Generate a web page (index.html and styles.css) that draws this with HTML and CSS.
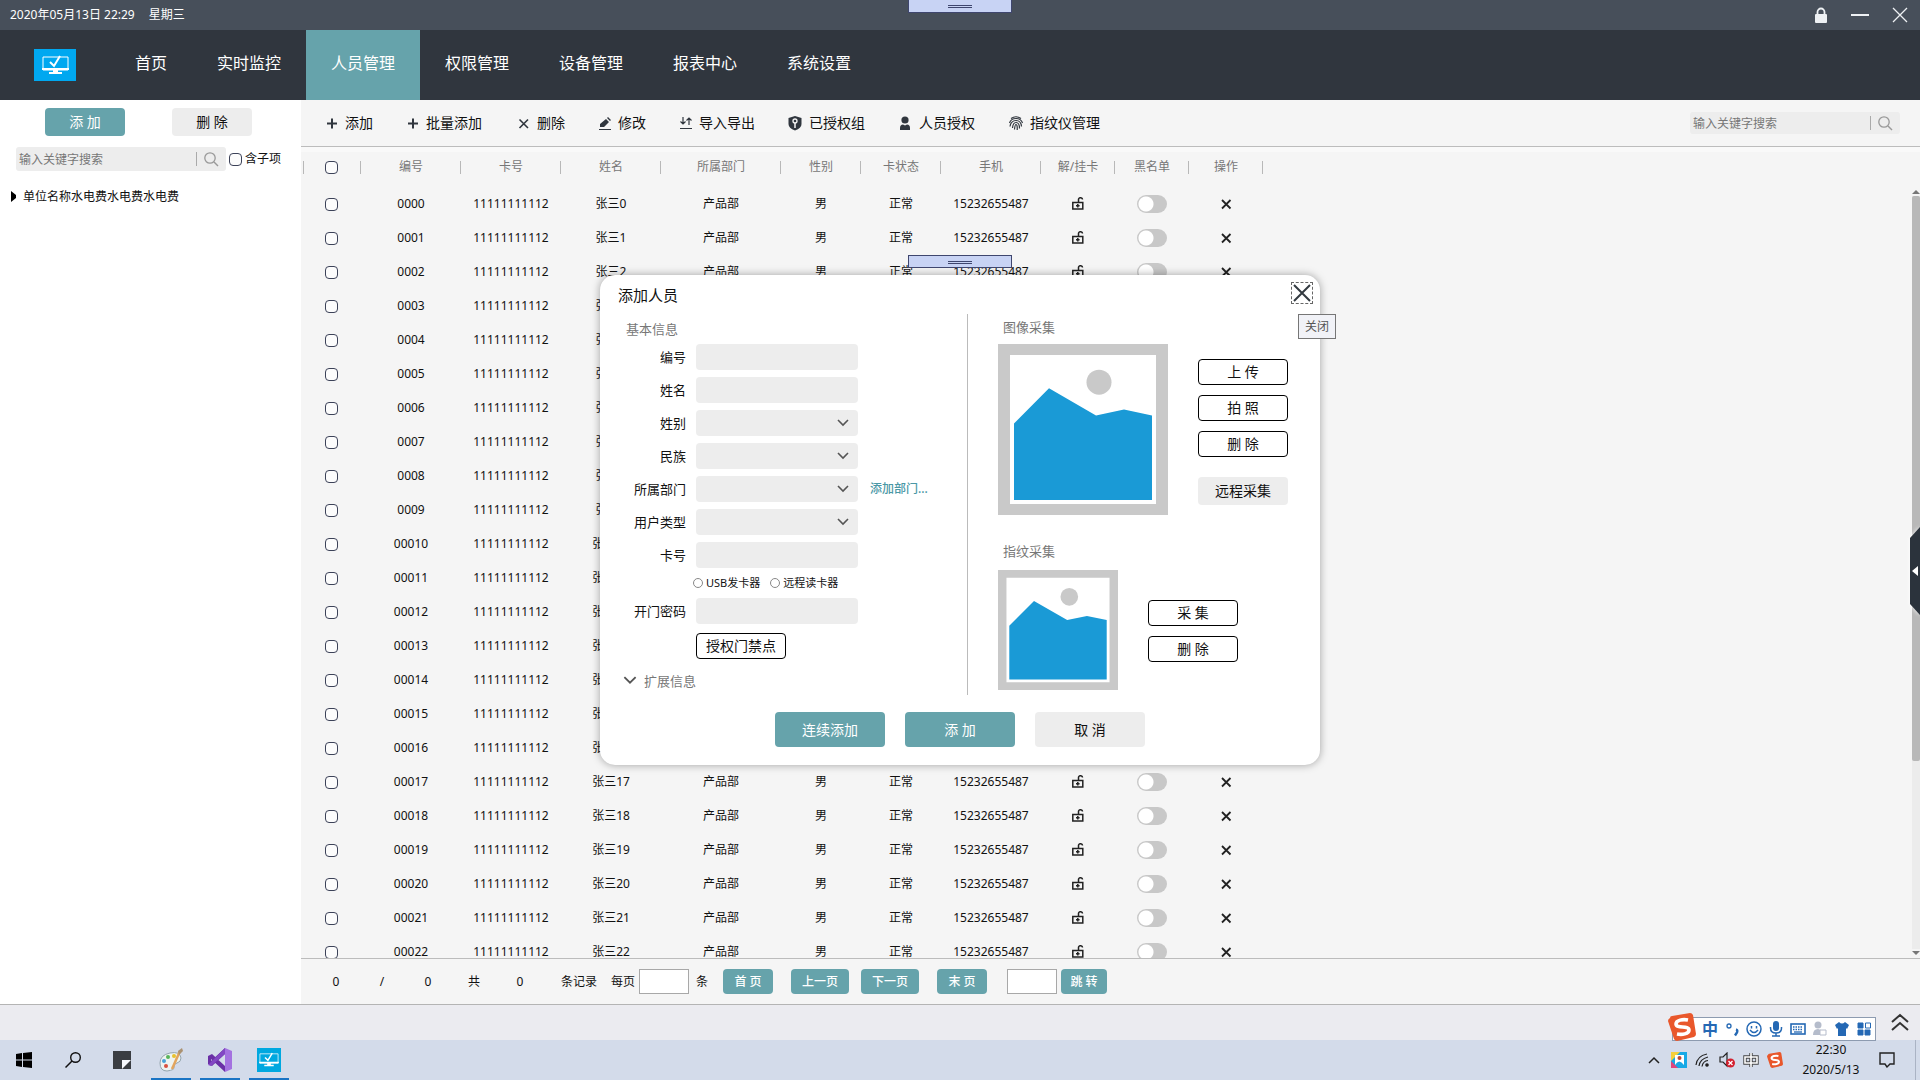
FILE: index.html
```html
<!DOCTYPE html>
<html lang="zh-CN">
<head>
<meta charset="utf-8">
<title>人员管理</title>
<link rel="stylesheet" href="styles.css">
</head>
<body>
<svg class="defs" aria-hidden="true">
  <symbol id="i-lock" viewBox="0 0 14 16"><path d="M3.500 7V5a3.500 3.500 0 0 1 7 0v2" fill="none" stroke="currentColor" stroke-width="1.800"/><rect x="1" y="7" width="12" height="9" rx="1" fill="currentColor"/></symbol>
  <symbol id="i-unlock" viewBox="0 0 14 14"><path d="M1.800 5.500h10v6.500h-10zM7.500 5.500V3a2 2 0 0 1 4-.5M6.800 7v3.500M5 8.700h3.600" fill="none" stroke="currentColor" stroke-width="1.500"/></symbol>
  <symbol id="i-x" viewBox="0 0 14 14"><path d="M3 3l8.500 8.500M11.500 3L3 11.500" fill="none" stroke="currentColor" stroke-width="1.800"/></symbol>
  <symbol id="i-plus" viewBox="0 0 16 16"><path d="M3 8.500h10M8 3.500v10" fill="none" stroke="currentColor" stroke-width="2"/></symbol>
  <symbol id="i-search" viewBox="0 0 16 16"><circle cx="7" cy="7" r="5.200" fill="none" stroke="currentColor" stroke-width="1.300"/><path d="M11 11l4 4" stroke="currentColor" stroke-width="1.500"/></symbol>
  <symbol id="i-down" viewBox="0 0 12 8"><path d="M1 1l5 5 5-5" fill="none" stroke="currentColor" stroke-width="1.600"/></symbol>
  <symbol id="i-monitor" viewBox="0 0 42 32"><path d="M9 8h25v13H9z" fill="none" stroke="currentColor"/><path d="M8 19h27v2H8zM19 21h5v2h4v2H15v-2h4z" fill="currentColor"/><path d="M16 13l4 4 6-10" fill="none" stroke="currentColor" stroke-width="2"/></symbol>
  <symbol id="i-sogou" viewBox="0 0 28 28"><path d="M2 5Q2 3 4 3L22 0Q24 0 25 2L28 21Q28 23 26 24L9 28Q7 28 6 26L0 8Q0 6 2 5z" fill="#e9572b"/><path d="M20 7C15 6 8 7 8 11c0 5 13 1 13 6 0 4-7 5-12 4" fill="none" stroke="#fff" stroke-width="3.600"/></symbol>
  <symbol id="i-picture" viewBox="0 0 170 170"><path d="M0 0h170v170H0z" fill="#c9c9c9"/><path d="M12 11h146v148H12z" fill="#fff"/><circle cx="101" cy="38" r="12.500" fill="#c9c9c9"/><path d="M16 79L51 44l47 27 28-6 28 6v84H16z" fill="#1a9ad6"/></symbol>
</svg>

<div class="app">
  <header class="titlebar">
    <time>2020年05月13日 22:29</time>
    <span class="weekday">星期三</span>
    <div class="window-tools">
      <button aria-label="锁定"><svg width="14" height="16"><use href="#i-lock"/></svg></button>
      <button aria-label="最小化"><svg width="18" height="16"><path d="M0 8h18" stroke="currentColor" stroke-width="2"/></svg></button>
      <button aria-label="退出"><svg width="16" height="16"><path d="M1 1l14 14M15 1L1 15" stroke="currentColor" stroke-width="1.300"/></svg></button>
    </div>
    <div class="grip grip-window"></div>
  </header>

  <nav class="mainnav">
    <svg class="logo" width="42" height="32"><use href="#i-monitor"/></svg>
    <a href="#">首页</a><a href="#">实时监控</a><a href="#" class="active">人员管理</a><a href="#">权限管理</a><a href="#">设备管理</a><a href="#">报表中心</a><a href="#">系统设置</a>
  </nav>

  <main class="main">
    <aside class="sidebar">
      <div class="side-actions">
        <button class="btn primary">添 加</button>
        <button class="btn plain">删 除</button>
      </div>
      <div class="side-search">
        <div class="search">
          <input type="text" aria-label="搜索部门" placeholder="输入关键字搜索">
          <button aria-label="搜索"><svg width="16" height="16"><use href="#i-search"/></svg></button>
        </div>
        <input type="checkbox" id="children"><label for="children">含子项</label>
      </div>
      <a href="#" class="tree-node"><svg width="6" height="12"><path d="M0 0l5 4v3l-5 4z"/></svg>单位名称水电费水电费水电费</a>
    </aside>

    <section class="content">
      <div class="toolbar">
        <button><svg width="16" height="16"><use href="#i-plus"/></svg>添加</button>
        <button><svg width="16" height="16"><use href="#i-plus"/></svg>批量添加</button>
        <button><svg width="18" height="16" viewBox="0 0 18 16"><path d="M5.500 4.500l8.500 8.500M14 4.500L5.500 13" fill="none" stroke="currentColor" stroke-width="1.600"/></svg>删除</button>
        <button><svg width="16" height="16" viewBox="0 0 16 16"><path d="M3 12V9l6-5 3 3-5 5zM10 3l1-1 3 3-1 1zM2 14h12v1H2z" fill="currentColor"/></svg>修改</button>
        <button><svg width="16" height="16" viewBox="0 0 16 16"><path d="M5 2v7M2.500 6.500L5 9l2.500-2.500M11 10V3M8.500 5.500L11 3l2.500 2.500M2 13.500h12" fill="none" stroke="currentColor" stroke-width="1.200"/></svg>导入导出</button>
        <button><svg width="17" height="16" viewBox="0 0 17 16"><path d="M8 1l6.500 2v6q0 4-6.500 6.500Q1.500 13 1.500 9V3z" fill="currentColor"/><circle cx="8" cy="6" r="2" fill="none" stroke="#f5f5f5" stroke-width="1.300"/><path d="M8 8v5" stroke="#f5f5f5" stroke-width="1.500"/></svg>已授权组</button>
        <button><svg width="17" height="16" viewBox="0 0 17 16"><circle cx="8" cy="5" r="3.600" fill="currentColor"/><path d="M3 15v-2q0-3.500 3-3.500l2 1 2-1q3 0 3 3.500v2z" fill="currentColor"/></svg>人员授权</button>
        <button><svg width="18" height="16" viewBox="0 0 18 16"><path d="M4 3.500Q9 0 14 3.500M2.500 8Q4 3.500 9 3.500T15.500 8M3 11.500Q4 5.500 9 5.500q5 0 5.500 6M5.500 13Q6 7.500 9 7.500q3.500 0 3.500 6M7.500 14.500Q8 9.500 9 9.500q1.500 0 1.200 5.500" fill="none" stroke="currentColor" stroke-width="1.200"/></svg>指纹仪管理</button>
        <div class="search">
          <input type="text" aria-label="搜索人员" placeholder="输入关键字搜索">
          <button aria-label="搜索"><svg width="16" height="16"><use href="#i-search"/></svg></button>
        </div>
      </div>

      <div class="list">
        <div class="list-view">
          <table class="people">
            <colgroup><col class="w60"><col class="w100"><col class="w100"><col class="w100"><col class="w120"><col class="w80"><col class="w80"><col class="w100"><col class="w74"><col class="w74"><col class="w74"></colgroup>
            <thead><tr><th><input type="checkbox" aria-label="全选"></th><th>编号</th><th>卡号</th><th>姓名</th><th>所属部门</th><th>性别</th><th>卡状态</th><th>手机</th><th>解/挂卡</th><th>黑名单</th><th>操作</th></tr></thead>
            <tbody id="rows"></tbody>
          </table>
        </div>
        <div class="scroll">
          <svg width="8" height="4"><path d="M4 0l4 4H0z"/></svg>
          <div class="track"><div class="thumb"></div></div>
          <svg width="8" height="4"><path d="M4 4l4-4H0z"/></svg>
        </div>
      </div>

      <div class="pager">
        <span class="num">0</span><span class="num">/</span><span class="num">0</span><span class="num">共</span><span class="num">0</span>
        <span class="records">条记录</span>
        <label for="size">每页</label><input type="text" id="size"><span class="unit">条</span>
        <button class="btn primary">首 页</button>
        <button class="btn primary wide">上一页</button>
        <button class="btn primary wide next">下一页</button>
        <button class="btn primary">末 页</button>
        <input type="text" class="goto" aria-label="页码"><button class="btn primary jump">跳 转</button>
      </div>
    </section>
  </main>

  <footer class="strip">
    <svg width="20" height="18" viewBox="0 0 20 18"><path d="M2 9l8-7 8 7M2 17l8-7 8 7" fill="none" stroke="#333" stroke-width="2"/></svg>
  </footer>

  <button class="drawer-tab" aria-label="展开"><svg width="10" height="88"><path d="M10 0v88L0 77V11z" fill="#2b333c"/><path d="M8 39v10l-6-5z" fill="#fff"/></svg></button>

  <div class="dialog" role="dialog" aria-labelledby="dlg-title">
    <div class="grip grip-dialog"></div>
    <div class="dialog-head">
      <h1 id="dlg-title">添加人员</h1>
      <button class="close" aria-label="关闭"><svg width="20" height="20"><path d="M2 2l16 16M18 2L2 18" stroke="currentColor" stroke-width="2"/></svg></button>
      <div class="tooltip" role="tooltip">关闭</div>
    </div>
    <form class="dialog-body">
      <div class="basic">
        <h2>基本信息</h2>
        <div class="fields">
          <label for="f-no">编号</label><input type="text" id="f-no">
          <label for="f-name">姓名</label><input type="text" id="f-name">
          <label for="f-sex">姓别</label><div class="select"><select id="f-sex"></select><svg width="12" height="8"><use href="#i-down"/></svg></div>
          <label for="f-nation">民族</label><div class="select"><select id="f-nation"></select><svg width="12" height="8"><use href="#i-down"/></svg></div>
          <label for="f-dept">所属部门</label><div class="select"><select id="f-dept"></select><svg width="12" height="8"><use href="#i-down"/></svg></div><a href="#">添加部门...</a>
          <label for="f-type">用户类型</label><div class="select"><select id="f-type"></select><svg width="12" height="8"><use href="#i-down"/></svg></div>
          <label for="f-card">卡号</label><input type="text" id="f-card">
          <div class="radios">
            <input type="radio" name="reader" id="r-usb"><label for="r-usb">USB发卡器</label>
            <input type="radio" name="reader" id="r-remote"><label for="r-remote">远程读卡器</label>
          </div>
          <label for="f-pwd">开门密码</label><input type="password" id="f-pwd">
          <button type="button" class="btn outline doors">授权门禁点</button>
        </div>
        <button type="button" class="more"><svg width="14" height="9" viewBox="0 0 12 8"><use href="#i-down"/></svg>扩展信息</button>
      </div>
      <div class="capture">
        <h2>图像采集</h2>
        <div class="shot">
          <svg width="170" height="171" viewBox="0 0 170 170" preserveAspectRatio="none"><use href="#i-picture" width="170" height="170"/></svg>
          <div class="shot-actions">
            <button type="button" class="btn outline">上 传</button>
            <button type="button" class="btn outline">拍 照</button>
            <button type="button" class="btn outline">删 除</button>
            <button type="button" class="btn plain remote">远程采集</button>
          </div>
        </div>
        <h2 class="finger-title">指纹采集</h2>
        <div class="shot finger">
          <svg width="120" height="120"><use href="#i-picture"/></svg>
          <div class="shot-actions">
            <button type="button" class="btn outline">采 集</button>
            <button type="button" class="btn outline">删 除</button>
          </div>
        </div>
      </div>
    </form>
    <div class="dialog-foot">
      <button class="btn primary">连续添加</button>
      <button class="btn primary">添 加</button>
      <button class="btn plain">取 消</button>
    </div>
  </div>

  <div class="ime">
    <svg class="ime-logo" width="28" height="28"><use href="#i-sogou"/></svg>
    <b>中</b>
    <svg width="16" height="16"><circle cx="5" cy="5" r="2" fill="none" stroke="currentColor" stroke-width="1.300"/><path d="M12 8.500q2 .5 1 3l-2 3" fill="none" stroke="currentColor" stroke-width="2.400"/></svg>
    <svg width="16" height="16" fill="none" stroke="currentColor" stroke-width="1.500"><circle cx="8" cy="8" r="7"/><path d="M5.500 5v2.500M10.500 5v2.500M4 9q4 5 8 0"/></svg>
    <svg width="16" height="16"><rect x="5" y="0" width="6" height="10" rx="3" fill="currentColor"/><path d="M2.500 6v1q0 5 5.500 5t5.500-5V6M8 12v3M4 15h8" fill="none" stroke="currentColor" stroke-width="1.500"/></svg>
    <svg width="16" height="16"><rect x="1" y="3" width="14" height="10" fill="none" stroke="currentColor" stroke-width="1.600"/><path d="M3 6h10M3 8.500h10" stroke="currentColor" stroke-width="1.500" stroke-dasharray="1.500 1"/><path d="M4 11h8" stroke="currentColor" stroke-width="1.300"/></svg>
    <svg class="dim" width="16" height="16"><circle cx="6" cy="4" r="3.500" fill="currentColor"/><path d="M1 14q0-6 5-6l3 1v5z" fill="currentColor"/><path d="M8 9h6v5H8z" fill="#fff" stroke="currentColor"/></svg>
    <svg width="16" height="16"><path d="M5 1q3 3 6 0l4 3-2 4-1-1v8H4V7L3 8 1 4z" fill="currentColor"/></svg>
    <svg width="16" height="16"><path d="M2 2h5v5H2zM2 9h5v5H2zM9 9h5v5H9z" fill="currentColor" stroke="currentColor"/><path d="M9.500 2h5v5h-5z" fill="none" stroke="currentColor"/></svg>
  </div>
</div>

<div class="taskbar">
  <button aria-label="开始"><svg width="16" height="16"><path d="M0 2l6-1v6.500H0zM7 1l9-1v7.500H7zM0 8.500h6V15l-6-1zM7 8.500h9V16l-9-1z"/></svg></button>
  <button aria-label="搜索"><svg width="16" height="16"><circle cx="10.500" cy="5.500" r="4.800" fill="none" stroke="#111" stroke-width="1.400"/><path d="M7 9L.5 15.500" stroke="#111" stroke-width="1.500"/></svg></button>
  <button aria-label="便笺"><svg width="18" height="18"><path d="M0 0h18v18H0z" fill="#3a3d42"/><path d="M9 18V9h9z" fill="#f6f8fc"/></svg></button>
  <button class="open" aria-label="画图"><svg width="24" height="24"><path d="M1 15Q1 7 11 5t11 5q0 4-4 5t-3 4-7 4q-7 0-7-8z" fill="#eef3f0" stroke="#93a4ae"/><circle cx="5" cy="13" r="2" fill="#4aa3d8"/><circle cx="9" cy="9" r="2" fill="#58b55c"/><circle cx="15" cy="8" r="2" fill="#e8c22f"/><circle cx="7" cy="18" r="2" fill="#d9513f"/><path d="M21 3L13 21" stroke="#e2a55e" stroke-width="2.500"/><path d="M23 0l-4 3 1 4 4-4z" fill="#ab9272"/></svg></button>
  <button class="open" aria-label="Visual Studio"><svg width="24" height="24"><path d="M17 0l7 3v18l-7 3z" fill="#a472e0"/><path d="M17 0v6L4 18l-4-2V8l4-2 13 12v6L3 11v2z" fill="#6a2fa6"/><path d="M17 0v6L3 18l-3-1z" fill="#8247c4"/></svg></button>
  <button class="open" aria-label="管理平台"><svg class="appicon" width="24" height="24" viewBox="5 0 33 33"><use href="#i-monitor" width="42" height="32"/></svg></button>
  <div class="tray">
    <svg width="12" height="8"><path d="M1 7l5-5 5 5" fill="none" stroke="#222" stroke-width="1.500"/></svg>
    <svg width="16" height="16"><path d="M0 0h16v16H0z" fill="#17a9e6"/><path d="M0 0h9L0 9z" fill="#f4cf3c"/><path d="M0 9l7 7H0z" fill="#e0457b"/><path d="M4 3h9v10H4z" fill="#fff"/><circle cx="8.500" cy="6" r="2" fill="#b94a35"/><path d="M4 13q4-7 9 0z" fill="#17a9e6"/></svg>
    <svg width="16" height="16" fill="none" stroke="#222" stroke-width="1.200"><path d="M1 13Q2 4 12 2M4 14Q5 7 13 5M7 14.500Q8 9 13 8.500"/><circle cx="12" cy="13" r="1.200" fill="#222"/></svg>
    <svg width="16" height="16"><path d="M1 5h3l4-4v13l-4-4H1z" fill="none" stroke="#222" stroke-width="1.200"/><circle cx="11.500" cy="11" r="4.500" fill="#d3202f"/><path d="M9.500 9l4 4M13.500 9l-4 4" stroke="#fff" stroke-width="1.300"/></svg>
    <svg width="16" height="16"><path d="M2 5h12v6H2zM8 1v14" fill="none" stroke="#444" stroke-width="3.400"/><path d="M2 5h12v6H2zM8 1v14" fill="none" stroke="#fff" stroke-width="1.600"/></svg>
    <svg width="16" height="16" viewBox="0 0 28 28"><use href="#i-sogou" width="28" height="28"/></svg>
    <div class="clock"><span>22:30</span><span>2020/5/13</span></div>
    <svg width="16" height="16"><path d="M1 1h14v11h-4l-3 3-2-3H1z" fill="none" stroke="#222" stroke-width="1.400"/></svg>
  </div>
</div>
<script src="app.js"></script>
</body>
</html>
```
FILE: styles.css
```css
* { box-sizing: border-box; }
body {
  margin: 0; height: 100vh; overflow: hidden;
  display: flex; flex-direction: column;
  font: 12px/18px "Noto Sans", "Noto Sans CJK SC", sans-serif;
  color: #111; background: #f5f5f5;
}
button, input, select { font: inherit; color: inherit; margin: 0; padding: 0; border: 0; background: none; }
button { cursor: pointer; }
a { color: inherit; text-decoration: none; }
h1, h2 { margin: 0; font-weight: 400; }
svg { display: block; flex: none; }
.defs { position: absolute; width: 0; height: 0; }

input[type=checkbox] {
  appearance: none; flex: none; width: 13px; height: 13px;
  border: 1px solid #3c4258; border-radius: 4px; background: #fcfcfc;
}
input[type=radio] {
  appearance: none; flex: none; width: 10px; height: 10px;
  border: 1px solid #888; border-radius: 50%; background: #fff;
}

.app { position: relative; flex: 1; min-height: 0; display: flex; flex-direction: column; }

/* Title bar and navigation */
.titlebar { display: flex; align-items: center; flex: none; height: 30px; padding: 0 12px 0 10px; background: #474f5a; color: #fff; line-height: 30px; }
.weekday { margin-left: 14px; }
.window-tools { margin-left: auto; display: flex; align-items: center; gap: 23px; color: #eef1f4; }
.mainnav { display: flex; align-items: center; flex: none; height: 70px; background: #30363e; color: #fff; font-size: 16px; }
.mainnav a { padding: 0 25px; line-height: 66px; height: 70px; }
.mainnav .active { background: #66a3ab; }
.logo { margin: 0 34px; background: #00a8f0; }

/* Small grab handles above a window */
.grip { position: absolute; left: 50%; margin-left: -52px; width: 104px; height: 13px; border: 1px solid #3f466e; background: linear-gradient(#3f466e 1px, transparent 1px 2px, #3f466e 2px 3px, transparent 3px) center 5px / 24px 3px no-repeat #c8d3f4; }
.grip-window { top: 0; border-top: 0; }
.grip-dialog { top: -20px; }

/* Shared buttons and search boxes */
.btn { width: 90px; height: 26px; border-radius: 4px; font-size: 14px; line-height: 20px; text-align: center; }
.primary { background: #66a3ab; color: #fff; }
.plain { background: #ededed; }
.outline { border: 1px solid #000; background: #fff; }
.search { display: flex; align-items: center; width: 210px; height: 24px; background: #ededed; border-radius: 3px; }
.search input { flex: 1; min-width: 0; padding-left: 3px; height: 24px; }
.search input::placeholder { color: #777; opacity: 1; }
.search button { width: 30px; height: 14px; padding-left: 6px; border-left: 1px solid #aaa; color: #999; display: flex; align-items: center; }

.main { flex: 1; min-height: 0; display: flex; border-bottom: 1px solid #b4b4b4; }
.sidebar { flex: none; width: 301px; background: #fff; }
.side-actions { display: flex; gap: 47px; padding: 8px 0 0 45px; }
.side-actions .btn { width: 80px; height: 28px; }
.side-search { display: flex; align-items: center; padding: 11px 0 0 16px; }
.side-search label { margin-left: 3px; }
.side-search input[type=checkbox] { margin-left: 3px; }
.tree-node { display: flex; align-items: center; gap: 6px; padding: 17px 0 0 11px; }

.content { flex: 1; min-width: 0; display: flex; flex-direction: column; }
.toolbar { display: flex; align-items: center; gap: 32px; flex: none; height: 47px; padding: 0 20px 0 23px; border-bottom: 1px solid #bcbcbc; font-size: 14px; }
.toolbar > button { display: flex; align-items: center; gap: 5px; line-height: 20px; white-space: nowrap; }
.toolbar > button svg { color: #30363e; }
.toolbar .search { margin-left: auto; height: 22px; font-size: 12px; }

/* People table */
.list { flex: 1; min-height: 0; display: flex; background: linear-gradient(#f9f9f9 5px, #f5f5f5 5px); }
.list-view { flex: 1; overflow: hidden; }
.people { table-layout: fixed; width: 962px; border-collapse: collapse; text-align: center; }
.people th, .people td { padding: 0; font-weight: 400; vertical-align: middle; }
.people th { height: 40px; color: #777; background: linear-gradient(#b8b8b8, #b8b8b8) right center / 1px 13px no-repeat; }
.people th:first-child { background: linear-gradient(#b8b8b8, #b8b8b8) right center / 1px 13px no-repeat, linear-gradient(#b8b8b8, #b8b8b8) 2px center / 1px 13px no-repeat; }
.people td { height: 34px; }
.people input[type=checkbox], .people td svg, .people td button { display: block; margin: 0 auto; color: #222; }
.people td .switch { appearance: none; width: 30px; height: 18px; border: 0; border-radius: 9px; background: radial-gradient(circle at 9px 9px, #fff 7px, #c8c8c8 8px); }
.w60 { width: 60px; } .w74 { width: 74px; } .w80 { width: 80px; } .w100 { width: 100px; } .w120 { width: 120px; }
.scroll { width: 8px; flex: none; display: flex; flex-direction: column; gap: 2px; padding: 43px 0 3px; }
.scroll svg { fill: #777; }
.track { flex: 1; background: #ececec; }
.thumb { height: 75%; border-radius: 2px; background: #b8b8b8; }

.pager { display: flex; align-items: center; flex: none; height: 46px; padding-left: 12px; border-top: 1px solid #bcbcbc; }
.num { width: 46px; text-align: center; }
.records { margin: 0 14px 0 18px; }
.pager input { width: 50px; height: 25px; margin: 0 7px 0 4px; border: 1px solid #a8a8a8; background: #fff; }
.pager .btn { width: 50px; height: 25px; margin-right: 18px; font-size: 12px; font-weight: 500; }
.unit { margin-right: 15px; }
.pager .wide { width: 58px; margin-right: 12px; }
.pager .next { margin-right: 18px; }
.pager .goto { margin: 0 4px 0 2px; }
.pager .jump { width: 46px; }

.strip { flex: none; height: 35px; padding: 8px 10px; background: #ebebf0; display: flex; justify-content: flex-end; }
.drawer-tab { position: absolute; right: 0; top: 527px; filter: drop-shadow(0 0 2px #fff); }

/* Add-person dialog */
.dialog { position: absolute; left: 50%; top: 50%; transform: translate(-50%, -50%); width: 720px; background: #fff; border-radius: 15px; box-shadow: 0 0 8px rgba(0, 0, 0, .35); }
.dialog-head { position: relative; display: flex; justify-content: space-between; align-items: center; height: 39px; padding: 0 7px 0 18px; }
.dialog-head h1 { font-size: 15px; line-height: 20px; }
.close { width: 22px; height: 22px; margin-bottom: 3px; border: 1px dashed #666; color: #333a40; }
.tooltip { position: absolute; top: 39px; right: -16px; width: 38px; height: 25px; border: 1px solid #767676; background: #f1f2f7; color: #555; line-height: 23px; text-align: center; }
.dialog-body { display: flex; font-size: 13px; }
.dialog-body h2 { font-size: 13px; color: #777; }
.basic { width: 368px; border-right: 1px solid #bbb; }
.basic h2 { padding-left: 26px; line-height: 30px; }
.fields { display: grid; grid-template-columns: 86px 162px 1fr; column-gap: 10px; row-gap: 7px; align-items: center; }
.fields > label { grid-column: 1; text-align: right; }
.fields > input, .select { grid-column: 2; width: 162px; height: 26px; border-radius: 4px; background: #ededed; }
.fields > a { font-size: 12px; padding-left: 2px; color: #4a98a6; font-weight: 500; }
.select { display: grid; align-items: center; }
.select > * { grid-area: 1 / 1; }
.select select { appearance: none; width: 162px; height: 26px; }
.select svg { justify-self: end; margin-right: 9px; color: #555; pointer-events: none; }
.radios { grid-column: 2 / 4; display: flex; align-items: center; gap: 3px; height: 16px; margin-left: -3px; font-size: 11px; line-height: 16px; }
.radios label + input { margin-left: 7px; }
.doors { grid-column: 2; margin-top: 2px; }
.more { display: flex; align-items: center; gap: 7px; height: 29px; margin-top: 7px; padding-left: 23px; color: #777; }
.more svg { color: #555; }
.capture { flex: 1; padding-left: 30px; }
.capture h2 { padding-left: 5px; margin-bottom: 4px; line-height: 26px; }
.capture .finger-title { margin: 23px 0 6px; }
.shot { display: flex; gap: 30px; }
.shot-actions { display: flex; flex-direction: column; gap: 10px; padding-top: 15px; }
.finger .shot-actions { padding-top: 30px; }
.remote { height: 28px; margin-top: 10px; }
.dialog-foot { display: flex; justify-content: center; gap: 20px; padding: 17px 0 18px; }
.dialog-foot .btn { width: 110px; height: 35px; }

/* Input method bar floating above the taskbar */
.ime { position: absolute; right: 44px; bottom: -1px; z-index: 2; display: flex; align-items: center; gap: 6px; width: 204px; height: 24px; border: 1px solid #8d9bb0; background: #fff; color: #2468b4; }
.ime-logo { margin: -4px 0 0 -5px; }
.ime b { width: 16px; font-size: 16px; line-height: 20px; }
.ime .dim { color: #b5bccb; }

.taskbar { flex: none; height: 40px; display: flex; gap: 9px; padding-left: 4px; background: #d3dbea; }
.taskbar > button { width: 40px; display: flex; align-items: center; justify-content: center; border-bottom: 2px solid transparent; border-top: 2px solid transparent; }
.taskbar > .open { border-bottom-color: #1a74c4; }
.appicon { background: #00a8e0; }
.logo, .appicon { color: #fff; }
.tray { display: flex; align-items: center; gap: 8px; margin-left: auto; margin-right: 4px; padding-right: 20px; border-right: 1px solid #aab3c4; }
.tray svg:first-child { margin-right: 3px; }
.clock { display: flex; flex-direction: column; text-align: center; width: 80px; line-height: 20px; }
```
FILE: app.js
```js
const body = document.getElementById('rows');
for (let i = 0; i < 23; i++) {
  body.insertAdjacentHTML('beforeend', `<tr>
    <td><input type="checkbox" aria-label="选择 000${i}"></td>
    <td>000${i}</td><td>11111111112</td><td>张三${i}</td><td>产品部</td><td>男</td><td>正常</td><td>15232655487</td>
    <td><button aria-label="解/挂卡"><svg width="14" height="14"><use href="#i-unlock"/></svg></button></td>
    <td><input type="checkbox" class="switch" aria-label="黑名单"></td>
    <td><button aria-label="删除"><svg width="14" height="14"><use href="#i-x"/></svg></button></td>
  </tr>`);
}
```
